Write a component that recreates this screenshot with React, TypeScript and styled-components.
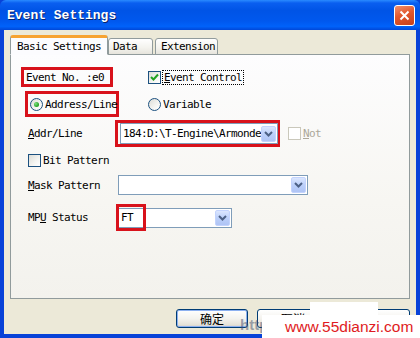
import React from "react";
import styled, { createGlobalStyle } from "styled-components";

const GlobalStyle = createGlobalStyle`
  html, body {
    margin: 0;
    padding: 0;
    overflow: hidden;
    background: #ffffff;
  }
`;

const MONO = `"DejaVu Sans Mono", "Liberation Mono", monospace`;

const Window = styled.div`
  position: relative;
  width: 420px;
  height: 338px;
  display: flex;
  flex-direction: column;
  background: #0842d8;
  font-family: ${MONO};
  font-size: 11px;
  letter-spacing: -0.62px;
  color: #000;
  overflow: hidden;
`;

const TitleBar = styled.div`
  height: 30px;
  flex-shrink: 0;
  display: flex;
  align-items: center;
  justify-content: space-between;
  padding: 0 5px 0 7px;
  background: linear-gradient(
    180deg,
    #2a8bff 0%,
    #0a5ff0 10%,
    #0054e6 35%,
    #0058ee 70%,
    #0062fa 88%,
    #0047d8 100%
  );
  border-radius: 6px 6px 0 0;
`;

const Title = styled.span`
  font-family: "Liberation Mono", monospace;
  font-weight: bold;
  font-size: 13px;
  letter-spacing: 0;
  color: #ffffff;
  text-shadow: 1px 1px 0 #0a246a;
  margin-top: 1px;
`;

const CloseButton = styled.div`
  width: 19px;
  height: 19px;
  border: 1px solid #ffffff;
  border-radius: 3px;
  background: linear-gradient(160deg, #f0906e 0%, #e2572d 45%, #c7401b 100%);
  display: flex;
  align-items: center;
  justify-content: center;
  margin-top: 1px;
`;

const Frame = styled.div`
  flex: 1;
  display: flex;
  flex-direction: column;
  border: 4px solid #0842d8;
  border-top: none;
  background: #ece9d8;
  padding: 5px 6px 6px 6px;
`;

const TabStrip = styled.div`
  height: 20px;
  display: flex;
  align-items: flex-end;
  position: relative;
  z-index: 1;
  margin-bottom: -1px;
`;

const Tab = styled.div<{ $active?: boolean; $w: number; $pl: number }>`
  box-sizing: border-box;
  width: ${(p) => p.$w}px;
  height: ${(p) => (p.$active ? 20 : 17)}px;
  padding-left: ${(p) => p.$pl}px;
  margin-right: ${(p) => (p.$active ? 0 : 2)}px;
  display: flex;
  align-items: center;
  border: 1px solid #919b9c;
  border-bottom: ${(p) => (p.$active ? "1px solid #fcfcfe" : "1px solid #919b9c")};
  border-top: ${(p) => (p.$active ? "3px solid #f7a331" : "1px solid #919b9c")};
  border-radius: 3px 3px 0 0;
  background: ${(p) =>
    p.$active ? "#fcfcfe" : "linear-gradient(180deg, #ffffff 0%, #f3f2ed 60%, #e6e4dc 100%)"};
  white-space: nowrap;
`;

const Panel = styled.div`
  height: 245px;
  box-sizing: border-box;
  border: 1px solid #919b9c;
  background: linear-gradient(180deg, #fdfdfe 0%, #f7f6f2 60%, #f3f2ed 100%);
  padding: 12px 0 0 9px;
  display: flex;
  flex-direction: column;
`;

const Row = styled.div<{ $h: number; $mt: number }>`
  height: ${(p) => p.$h}px;
  margin-top: ${(p) => p.$mt}px;
  display: flex;
  align-items: center;
`;

const Cell = styled.div<{ $w: number; $pl?: number }>`
  width: ${(p) => p.$w}px;
  flex-shrink: 0;
  box-sizing: border-box;
  padding-left: ${(p) => p.$pl ?? 0}px;
  height: 100%;
  display: flex;
  align-items: center;
`;

const Mark = styled.div<{ $w: number; $h: number; $ml?: number }>`
  box-sizing: border-box;
  width: ${(p) => p.$w}px;
  height: ${(p) => p.$h}px;
  margin-left: ${(p) => p.$ml ?? 0}px;
  border: 3px solid #d8121b;
  display: flex;
  align-items: center;
  padding-left: 2px;
`;

const MarkOverlay = styled.div`
  position: absolute;
  left: -3px;
  top: -5px;
  width: 30px;
  height: 27px;
  box-sizing: border-box;
  border: 3px solid #d8121b;
  pointer-events: none;
`;

const Label = styled.span<{ $disabled?: boolean; $focus?: boolean }>`
  white-space: nowrap;
  color: ${(p) => (p.$disabled ? "#aca899" : "#000")};
  outline: ${(p) => (p.$focus ? "1px dotted #000" : "none")};
  outline-offset: 0;
  padding: ${(p) => (p.$focus ? "0 1px" : "0")};
  line-height: 13px;
`;

const Check = styled.span<{ $disabled?: boolean }>`
  width: 13px;
  height: 13px;
  box-sizing: border-box;
  flex-shrink: 0;
  border: 1px solid ${(p) => (p.$disabled ? "#cac8bb" : "#1c5180")};
  background: ${(p) =>
    p.$disabled ? "#ffffff" : "linear-gradient(135deg, #dcdcd6 0%, #f5f5f2 60%, #ffffff 100%)"};
  display: inline-flex;
  align-items: center;
  justify-content: center;
  margin-right: 2px;
`;

const Radio = styled.span`
  width: 13px;
  height: 13px;
  box-sizing: border-box;
  flex-shrink: 0;
  border-radius: 50%;
  border: 1px solid #1c5180;
  background: linear-gradient(135deg, #dcdcd6 0%, #f5f5f2 60%, #ffffff 100%);
  display: inline-flex;
  align-items: center;
  justify-content: center;
  margin-right: 2px;
`;

const RadioDot = styled.span`
  width: 5px;
  height: 5px;
  border-radius: 50%;
  background: radial-gradient(circle at 35% 35%, #7fe07f 0%, #21a121 70%);
`;

const Combo = styled.div<{ $w: number; $h: number }>`
  position: relative;
  box-sizing: border-box;
  width: ${(p) => p.$w}px;
  height: ${(p) => p.$h}px;
  border: 1px solid #7f9db9;
  background: #ffffff;
  display: flex;
  align-items: center;
  padding: 0 1px 0 2px;
`;

const ComboText = styled.span`
  flex: 1;
  overflow: hidden;
  white-space: nowrap;
`;

const DropButton = styled.span`
  width: 15px;
  height: 16px;
  box-sizing: border-box;
  flex-shrink: 0;
  border: 1px solid #c3d3fd;
  border-radius: 2px;
  background: linear-gradient(180deg, #dbe6fe 0%, #bcd0fa 50%, #afc4f5 100%);
  display: flex;
  align-items: center;
  justify-content: center;
`;

const Buttons = styled.div`
  display: flex;
  justify-content: flex-end;
  gap: 9px;
  margin-top: 10px;
`;

const Button = styled.div<{ $default?: boolean }>`
  width: 72px;
  height: 19px;
  box-sizing: border-box;
  border: 1px solid #003c74;
  border-radius: 3px;
  background: linear-gradient(180deg, #ffffff 0%, #f4f3ee 50%, #e6e3da 85%, #d6d0c5 100%);
  box-shadow: ${(p) => (p.$default ? "inset 0 0 0 1px #8cb0f0" : "none")};
  display: flex;
  align-items: center;
  justify-content: center;
  font-family: "Noto Sans CJK SC", sans-serif;
  font-size: 12px;
  letter-spacing: 0;
`;

const Watermark = styled.div`
  position: absolute;
  left: 262px;
  top: 315px;
  width: 158px;
  height: 23px;
  background: #ffffff;
  box-sizing: border-box;
  padding-left: 23px;
  display: flex;
  align-items: center;
  font-family: "Liberation Sans", Arial, sans-serif;
  font-size: 15.5px;
  letter-spacing: 0;
  color: #e01b22;
`;

const WatermarkTop = styled.div`
  position: absolute;
  left: 310px;
  top: 302px;
  width: 68px;
  height: 14px;
  background: #ffffff;
`;

const WatermarkHttp = styled.div`
  position: absolute;
  left: 240px;
  top: 316px;
  font-family: "Liberation Sans", Arial, sans-serif;
  font-weight: bold;
  font-size: 15px;
  letter-spacing: 0;
  color: rgba(70, 80, 110, 0.5);
`;

const Chevron = () => (
  <svg width="9" height="6" viewBox="0 0 9 6">
    <path d="M1 1 L4.5 4.5 L8 1" fill="none" stroke="#4d6185" strokeWidth="2" />
  </svg>
);

const CheckMark = () => (
  <svg width="9" height="9" viewBox="0 0 9 9">
    <path d="M1 4 L3.5 6.5 L8 1.5" fill="none" stroke="#21a121" strokeWidth="2" />
  </svg>
);

const CloseX = () => (
  <svg width="11" height="11" viewBox="0 0 11 11">
    <path d="M1.5 1.5 L9.5 9.5 M9.5 1.5 L1.5 9.5" stroke="#ffffff" strokeWidth="2" />
  </svg>
);

export default function App() {
  return (
    <Window>
      <GlobalStyle />
      <TitleBar>
        <Title>Event Settings</Title>
        <CloseButton>
          <CloseX />
        </CloseButton>
      </TitleBar>
      <Frame>
        <TabStrip>
          <Tab $active $w={98} $pl={6}>Basic Settings</Tab>
          <Tab $w={45} $pl={4}>Data</Tab>
          <Tab $w={63} $pl={5}>Extension</Tab>
        </TabStrip>
        <Panel>
          <Row $h={20} $mt={0}>
            <Cell $w={128}>
              <Mark $w={92} $h={20} $ml={1}>
                <Label>Event No. :e0</Label>
              </Mark>
            </Cell>
            <Check>
              <CheckMark />
            </Check>
            <Label $focus>
              <u>E</u>vent Control
            </Label>
          </Row>
          <Row $h={26} $mt={4}>
            <Cell $w={128}>
              <Mark $w={94} $h={26} $ml={5}>
                <Radio>
                  <RadioDot />
                </Radio>
                <Label>Address/Line</Label>
              </Mark>
            </Cell>
            <Radio />
            <Label>Variable</Label>
          </Row>
          <Row $h={27} $mt={3}>
            <Cell $w={95} $pl={8}>
              <Label>
                <u>A</u>ddr/Line
              </Label>
            </Cell>
            <Mark $w={165} $h={27}>
              <Combo $w={159} $h={21}>
                <ComboText>184:D:\T-Engine\Armonde</ComboText>
                <DropButton>
                  <Chevron />
                </DropButton>
              </Combo>
            </Mark>
            <Cell $w={60} $pl={8}>
              <Check $disabled />
              <Label $disabled>
                <u>N</u>ot
              </Label>
            </Cell>
          </Row>
          <Row $h={14} $mt={6}>
            <Cell $w={140} $pl={8}>
              <Check />
              <Label>Bit Pattern</Label>
            </Cell>
          </Row>
          <Row $h={20} $mt={8}>
            <Cell $w={98} $pl={8}>
              <Label>
                <u>M</u>ask Pattern
              </Label>
            </Cell>
            <Combo $w={190} $h={20}>
              <ComboText />
              <DropButton>
                <Chevron />
              </DropButton>
            </Combo>
          </Row>
          <Row $h={27} $mt={9}>
            <Cell $w={98} $pl={8}>
              <Label>
                MP<u>U</u> Status
              </Label>
            </Cell>
            <Combo $w={114} $h={20}>
              <ComboText>FT</ComboText>
              <DropButton>
                <Chevron />
              </DropButton>
              <MarkOverlay />
            </Combo>
          </Row>
        </Panel>
        <Buttons>
          <Button $default>确定</Button>
          <Button>取消</Button>
          <Button />
        </Buttons>
      </Frame>
      <WatermarkHttp>http</WatermarkHttp>
      <WatermarkTop />
      <Watermark>www.55dianzi.com</Watermark>
    </Window>
  );
}
